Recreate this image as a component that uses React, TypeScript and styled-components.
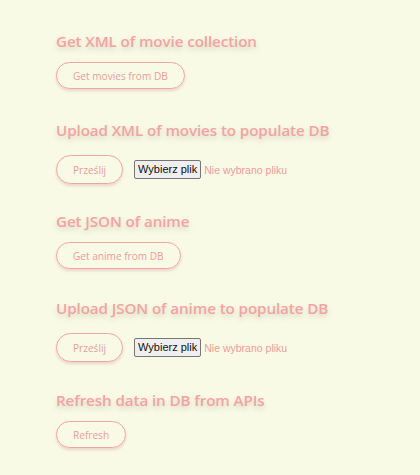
import React from "react";
import styled, { createGlobalStyle } from "styled-components";

const Global = createGlobalStyle`
  html, body { margin: 0; padding: 0; background: #f9fae5; }
  body { font-family: "Open Sans", "Noto Sans", sans-serif; }
`;

const Page = styled.div`
  display: flex;
  flex-direction: column;
  padding: 30px 56px 0;
  height: 475px;
  overflow: hidden;
  box-sizing: border-box;
`;

const Section = styled.section<{ $after: number }>`
  display: flex;
  flex-direction: column;
  align-items: flex-start;
  gap: 10px;
  margin-bottom: ${(p) => p.$after}px;
`;

const Heading = styled.h2`
  margin: 0;
  font-size: 15.2px;
  line-height: 22px;
  font-weight: 600;
  color: #f3a3a3;
  text-shadow: 0 3px 5px rgba(120, 110, 90, 0.25);
  letter-spacing: -0.1px;
`;

const PillButton = styled.button<{ $tall?: boolean }>`
  font-family: "Open Sans", sans-serif;
  font-size: 10.1px;
  color: #e99c9c;
  background: transparent;
  border: 1px solid #f0a4a4;
  border-radius: 999px;
  height: ${(p) => (p.$tall ? 29 : 27)}px;
  padding: 0 16px;
  box-shadow: 0 2px 3px rgba(200, 150, 140, 0.35);
  cursor: pointer;
`;

const Row = styled.div`
  display: flex;
  align-items: center;
  gap: 11px;
  margin-top: 4px;
`;

const FileWrap = styled.label`
  display: flex;
  align-items: center;
  gap: 3px;
  cursor: pointer;
`;

const HiddenInput = styled.input`
  display: none;
`;

const FileButton = styled.span`
  font-family: "Liberation Sans", Arial, sans-serif;
  font-size: 11px;
  color: #111;
  background: #efefef;
  border: 1px solid #767676;
  border-radius: 2px;
  padding: 1px 3px;
  line-height: 15px;
`;

const FileText = styled.span`
  font-family: "Liberation Sans", Arial, sans-serif;
  font-size: 10.5px;
  color: #ee9a9a;
`;

function Upload() {
  return (
    <Row>
      <PillButton $tall>Prześlij</PillButton>
      <FileWrap>
        <HiddenInput type="file" />
        <FileButton>Wybierz plik</FileButton>
        <FileText>Nie wybrano pliku</FileText>
      </FileWrap>
    </Row>
  );
}

export default function App() {
  return (
    <>
      <Global />
      <Page>
        <Section $after={30}>
          <Heading>Get XML of movie collection</Heading>
          <PillButton>Get movies from DB</PillButton>
        </Section>
        <Section $after={26}>
          <Heading>Upload XML of movies to populate DB</Heading>
          <Upload />
        </Section>
        <Section $after={28}>
          <Heading>Get JSON of anime</Heading>
          <PillButton>Get anime from DB</PillButton>
        </Section>
        <Section $after={27}>
          <Heading>Upload JSON of anime to populate DB</Heading>
          <Upload />
        </Section>
        <Section $after={0}>
          <Heading>Refresh data in DB from APIs</Heading>
          <PillButton>Refresh</PillButton>
        </Section>
      </Page>
    </>
  );
}
